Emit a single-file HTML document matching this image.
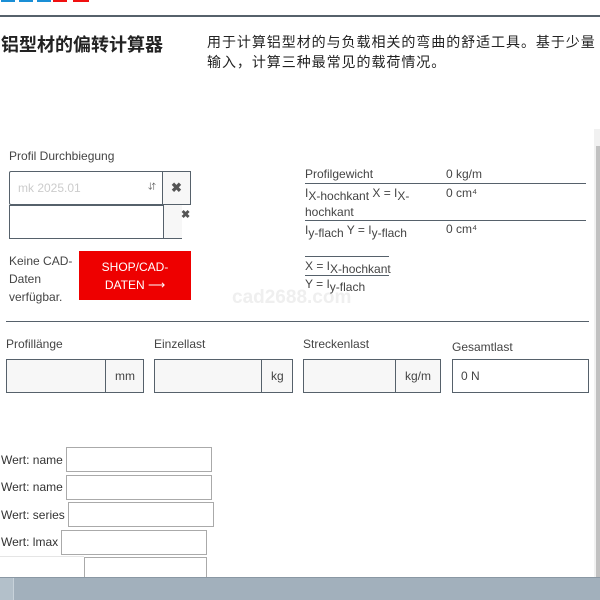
<!DOCTYPE html>
<html><head><meta charset="utf-8"><style>
*{box-sizing:border-box;margin:0;padding:0}
body{width:600px;height:600px;overflow:hidden;background:#fff;position:relative;font-family:"Liberation Sans","Noto Sans CJK SC",sans-serif;color:#333;font-size:12px}
.a{position:absolute}
.lbl{color:#444;font-size:12px}
.box{position:absolute;border:1px solid #56616b;background:#f7f7f7}
.ln{position:absolute;height:1px;background:#56616b}
.w{position:absolute;font-size:12px;color:#333}
.wi{position:absolute;border:1px solid #aaa;background:#fff;height:25px}
sub{font-size:12px;vertical-align:-3px;line-height:0}
</style></head><body>
<div class="a" style="left:1px;top:0;width:14px;height:2px;background:#1a8fd6"></div>
<div class="a" style="left:19px;top:0;width:14px;height:2px;background:#1a8fd6"></div>
<div class="a" style="left:37px;top:0;width:14px;height:2px;background:#1a8fd6"></div>
<div class="a" style="left:53px;top:0;width:14px;height:2px;background:#f01010"></div>
<div class="a" style="left:73px;top:0;width:16px;height:2px;background:#f01010"></div>
<div class="ln" style="left:0;top:15px;width:600px;height:2px"></div>
<div class="a" style="left:1px;top:31px;font-size:18px;font-weight:bold;color:#222">铝型材的偏转计算器</div>
<div class="a" style="left:207px;top:32px;font-size:14px;line-height:20px;color:#222;width:420px;white-space:nowrap;letter-spacing:0.95px">用于计算铝型材的与负载相关的弯曲的舒适工具。基于少量<br>输入，计算三种最常见的载荷情况。</div>

<div class="a lbl" style="left:9px;top:149px">Profil Durchbiegung</div>
<div class="box" style="left:9px;top:171px;width:154px;height:34px;background:#fff;border-radius:2px 0 0 2px"></div>
<div class="a" style="left:18px;top:181px;color:#ccc">mk 2025.01</div>
<div class="a" style="left:148px;top:181px;font-size:8px;color:#555">&#8693;</div>
<div class="box" style="left:162px;top:171px;width:29px;height:34px"></div>
<div class="a" style="left:171px;top:180px;font-size:13px;font-weight:bold;color:#555">&#10006;</div>
<div class="box" style="left:9px;top:205px;width:155px;height:34px;background:#fff"></div>
<div class="a" style="left:164px;top:205px;width:18px;height:34px;background:#f7f7f7;border-bottom:1px solid #56616b"></div>
<div class="a" style="left:181px;top:208px;font-size:11px;font-weight:bold;color:#555">&#10006;</div>
<div class="a lbl" style="left:9px;top:252px;font-size:12px;line-height:18px">Keine CAD-<br>Daten<br>verfügbar.</div>
<div class="a" style="left:79px;top:251px;width:112px;height:49px;background:#ee0000;color:#fff;text-align:center;font-size:12px;line-height:18px;padding-top:7px">SHOP/CAD-<br>DATEN &#10230;</div>
<div class="a" style="left:232px;top:287px;font-size:19px;font-weight:bold;color:#efefef">cad2688.com</div>

<div class="a lbl" style="left:305px;top:167px">Profilgewicht</div>
<div class="a lbl" style="left:446px;top:167px">0 kg/m</div>
<div class="ln" style="left:305px;top:183px;width:281px"></div>
<div class="a lbl" style="left:305px;top:184px;line-height:19px;width:120px">I<sub>X-hochkant</sub> X = I<sub>X-</sub><br>hochkant</div>
<div class="a lbl" style="left:446px;top:186px">0 cm⁴</div>
<div class="ln" style="left:305px;top:220px;width:281px"></div>
<div class="a lbl" style="left:305px;top:223px">I<sub>y-flach</sub> Y = I<sub>y-flach</sub></div>
<div class="a lbl" style="left:446px;top:222px">0 cm⁴</div>
<div class="ln" style="left:305px;top:256px;width:84px"></div>
<div class="a lbl" style="left:305px;top:259px">X = I<sub>X-hochkant</sub></div>
<div class="ln" style="left:305px;top:275px;width:84px"></div>
<div class="a lbl" style="left:305px;top:277px">Y = I<sub>y-flach</sub></div>

<div class="ln" style="left:6px;top:321px;width:583px"></div>
<div class="a lbl" style="left:6px;top:337px">Profillänge</div>
<div class="a lbl" style="left:154px;top:337px">Einzellast</div>
<div class="a lbl" style="left:303px;top:337px">Streckenlast</div>
<div class="a lbl" style="left:452px;top:340px">Gesamtlast</div>
<div class="box" style="left:6px;top:359px;width:100px;height:34px"></div>
<div class="box" style="left:105px;top:359px;width:39px;height:34px;background:#f7f7f7"></div>
<div class="a lbl" style="left:115px;top:369px">mm</div>
<div class="box" style="left:154px;top:359px;width:108px;height:34px"></div>
<div class="box" style="left:261px;top:359px;width:32px;height:34px"></div>
<div class="a lbl" style="left:271px;top:369px">kg</div>
<div class="box" style="left:303px;top:359px;width:93px;height:34px"></div>
<div class="box" style="left:395px;top:359px;width:46px;height:34px"></div>
<div class="a lbl" style="left:405px;top:369px">kg/m</div>
<div class="box" style="left:452px;top:359px;width:137px;height:34px;background:#fff"></div>
<div class="a lbl" style="left:461px;top:369px">0 N</div>

<div class="w" style="left:1px;top:453px">Wert: name</div>
<div class="wi" style="left:66px;top:447px;width:146px"></div>
<div class="w" style="left:1px;top:480px">Wert: name</div>
<div class="wi" style="left:66px;top:475px;width:146px"></div>
<div class="w" style="left:1px;top:508px">Wert: series</div>
<div class="wi" style="left:68px;top:502px;width:146px"></div>
<div class="w" style="left:1px;top:535px">Wert: lmax</div>
<div class="wi" style="left:61px;top:530px;width:146px"></div>
<div class="a" style="left:0;top:556px;width:84px;height:1px;background:#e5e5e5"></div>
<div class="wi" style="left:84px;top:557px;width:123px;height:25px"></div>

<div class="a" style="left:594px;top:129px;width:6px;height:448px;background:#f1f1f1"></div>
<div class="a" style="left:596px;top:146px;width:4px;height:431px;background:#c1c1c1"></div>
<div class="a" style="left:0;top:577px;width:600px;height:23px;background:#a2b0bc;border-top:1px solid #8a98a4"></div>
<div class="a" style="left:0;top:578px;width:14px;height:22px;background:#b3c0ca;border-right:1px solid #c8d2da"></div>
</body></html>
